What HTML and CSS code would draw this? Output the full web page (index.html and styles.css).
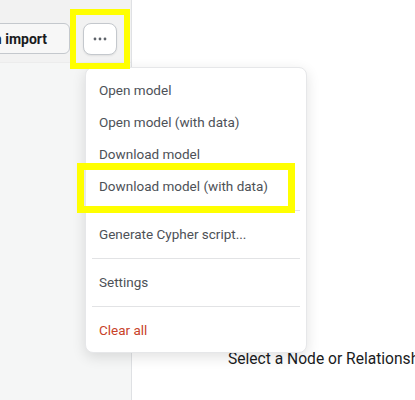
FILE: index.html
```html
<!DOCTYPE html>
<html lang="en">
<head>
<meta charset="utf-8">
<title>Model menu</title>
<link rel="stylesheet" href="styles.css">
</head>
<body>
<div class="app">
  <aside class="sidebar">
    <div class="toolbar">
      <button class="btn btn-text">Run import</button>
      <button class="btn btn-icon" aria-label="More">
        <svg width="16" height="4" viewBox="0 0 16 4"><circle cx="3" cy="2" r="1.4"/><circle cx="8" cy="2" r="1.4"/><circle cx="13" cy="2" r="1.4"/></svg>
      </button>
    </div>
    <div class="panel"></div>
  </aside>
  <main class="main">
    <p class="empty">Select a Node or Relationship</p>
  </main>
</div>

<div class="menu">
  <div class="item">Open model</div>
  <div class="item">Open model (with data)</div>
  <div class="item">Download model</div>
  <div class="item">Download model (with data)</div>
  <div class="sep"></div>
  <div class="item">Generate Cypher script...</div>
  <div class="sep"></div>
  <div class="item">Settings</div>
  <div class="sep"></div>
  <div class="item danger">Clear all</div>
</div>

<div class="hl hl-more"></div>
<div class="hl hl-download"></div>
</body>
</html>
```

FILE: styles.css
```css
* { box-sizing: border-box; }
html, body {
  margin: 0;
  padding: 0;
  width: 415px;
  height: 400px;
  overflow: hidden;
  background: #ffffff;
  font-family: Roboto, "Liberation Sans", sans-serif;
}
.app {
  display: flex;
  height: 400px;
}
.sidebar {
  width: 132px;
  flex-shrink: 0;
  background: #f5f6f6;
  border-right: 1px solid #dfe1e4;
  overflow: hidden;
  display: flex;
  flex-direction: column;
}
.toolbar {
  height: 63px;
  background: #f2f2f2;
  display: flex;
  justify-content: flex-end;
  align-items: flex-start;
  gap: 13px;
  padding: 23px 14px 0 0;
  border-bottom: 1px solid #ececec;
}
.btn {
  flex-shrink: 0;
  height: 31px;
  border: 1px solid #c4c8cd;
  border-radius: 6px;
  background: #ffffff;
  font-family: inherit;
  padding: 0;
  margin: 0;
}
.btn-text {
  font-size: 14px;
  font-weight: 700;
  color: #1a1b1d;
  padding: 0 22px 0 16px;
  background: #f7f7f7;
}
.btn-icon {
  width: 34px;
  height: 32px;
  border-radius: 8px;
  display: flex;
  align-items: center;
  justify-content: center;
  box-shadow: 0 1px 2px rgba(0,0,0,0.08);
}
.btn-icon svg { fill: #5e636a; }
.panel { flex: 1; }
.main {
  flex: 1;
  padding: 350px 0 0 96px;
  white-space: nowrap;
  overflow: hidden;
}
.empty {
  margin: 0;
  font-size: 15.6px;
  line-height: 18px;
  color: #1a1b1d;
}
.menu {
  position: absolute;
  left: 85px;
  top: 67px;
  width: 222px;
  background: #ffffff;
  border: 1px solid #e6e7e9;
  border-radius: 8px;
  box-shadow: 0 4px 14px rgba(0,0,0,0.12);
  padding: 6px 0;
}
.item {
  height: 32px;
  line-height: 32px;
  padding: 0 13px;
  font-size: 13.5px;
  color: #4d5157;
  white-space: nowrap;
}
.item.danger { color: #c8432a; }
.sep {
  height: 1px;
  background: #e2e3e5;
  margin: 8px 6px 7px;
}
.hl {
  position: absolute;
  border: 6px solid #ffff00;
}
.hl-more {
  left: 70px;
  top: 9px;
  width: 60px;
  height: 60px;
}
.hl-download {
  left: 77px;
  top: 163px;
  width: 218px;
  height: 50px;
  border-width: 7px;
}
```
